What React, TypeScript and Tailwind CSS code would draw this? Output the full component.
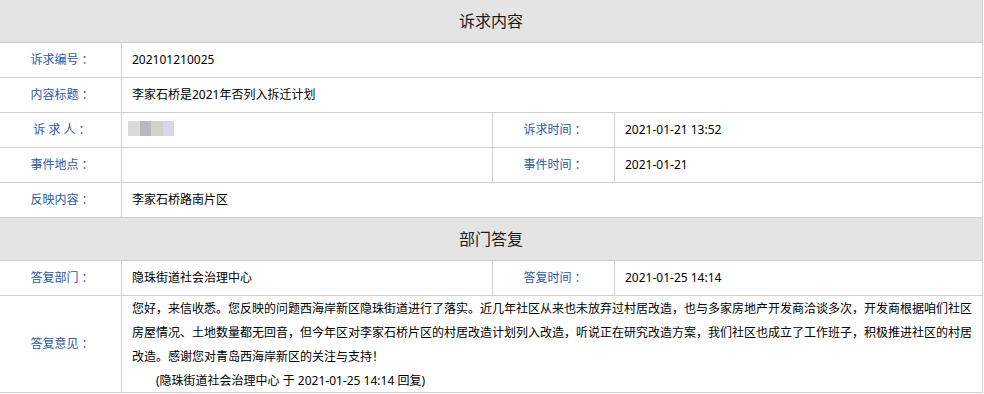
const font = { fontFamily: '"Noto Sans", "Noto Sans CJK SC", sans-serif' }

function Colon() {
  return <span style={{ fontFamily: '"Noto Sans CJK TC", sans-serif' }}>：</span>
}

function Label({ children, tall }: { children: React.ReactNode; tall?: boolean }) {
  return (
    <div
      className={`flex items-center justify-center border-r border-b border-[#d0d0d0] text-[12px] text-[#2b5aa6] ${tall ? 'h-[97px]' : 'h-[35px]'}`}
    >
      {children}
      <Colon />
    </div>
  )
}

function Value({ children, span }: { children?: React.ReactNode; span?: boolean }) {
  return (
    <div
      className={`flex h-[35px] items-center border-r border-b border-[#d0d0d0] pl-[10px] text-[12px] text-black ${span ? 'col-span-3' : ''}`}
    >
      {children}
    </div>
  )
}

function Header({ title }: { title: string }) {
  return (
    <div className="col-span-4 flex h-[43px] items-center justify-center border-r border-b border-[#d0d0d0] bg-[#e4e4e4] text-[16px] text-[#1a1a1a]">
      {title}
    </div>
  )
}

function BlurredName() {
  return (
    <div className="flex h-[15px] -ml-[4px] mt-[-4px]">
      <div className="w-[12px] bg-[#dadada]" />
      <div className="w-[11px] bg-[#b9b8be]" />
      <div className="w-[12px] bg-[#d0d2cc]" />
      <div className="w-[11px] bg-[#d9d7e3]" />
    </div>
  )
}

export default function App() {
  return (
    <div className="h-[394px] w-[984px] bg-white" style={font}>
      <div className="grid w-[983px] grid-cols-[122px_371px_122px_368px]">
        <Header title="诉求内容" />

        <Label>诉求编号</Label>
        <Value span>202101210025</Value>

        <Label>内容标题</Label>
        <Value span>李家石桥是2021年否列入拆迁计划</Value>

        <Label>诉&nbsp;求&nbsp;人</Label>
        <Value>
          <BlurredName />
        </Value>
        <Label>诉求时间</Label>
        <Value>2021-01-21 13:52</Value>

        <Label>事件地点</Label>
        <Value />
        <Label>事件时间</Label>
        <Value>2021-01-21</Value>

        <Label>反映内容</Label>
        <Value span>李家石桥路南片区</Value>

        <Header title="部门答复" />

        <Label>答复部门</Label>
        <Value>隐珠街道社会治理中心</Value>
        <Label>答复时间</Label>
        <Value>2021-01-25 14:14</Value>

        <Label tall>答复意见</Label>
        <div className="col-span-3 h-[97px] border-r border-b border-[#d0d0d0] px-[10px] pt-[1px] text-[12px] leading-[24px] text-black">
          <div className="whitespace-nowrap">
            您好，来信收悉。您反映的问题西海岸新区隐珠街道进行了落实。近几年社区从来也未放弃过村居改造，也与多家房地产开发商洽谈多次，开发商根据咱们社区
          </div>
          <div className="whitespace-nowrap">
            房屋情况、土地数量都无回音，但今年区对李家石桥片区的村居改造计划列入改造，听说正在研究改造方案，我们社区也成立了工作班子，积极推进社区的村居
          </div>
          <div className="whitespace-nowrap">改造。感谢您对青岛西海岸新区的关注与支持！</div>
          <div className="whitespace-nowrap pl-[24px]">(隐珠街道社会治理中心 于 2021-01-25 14:14 回复)</div>
        </div>
      </div>
    </div>
  )
}
